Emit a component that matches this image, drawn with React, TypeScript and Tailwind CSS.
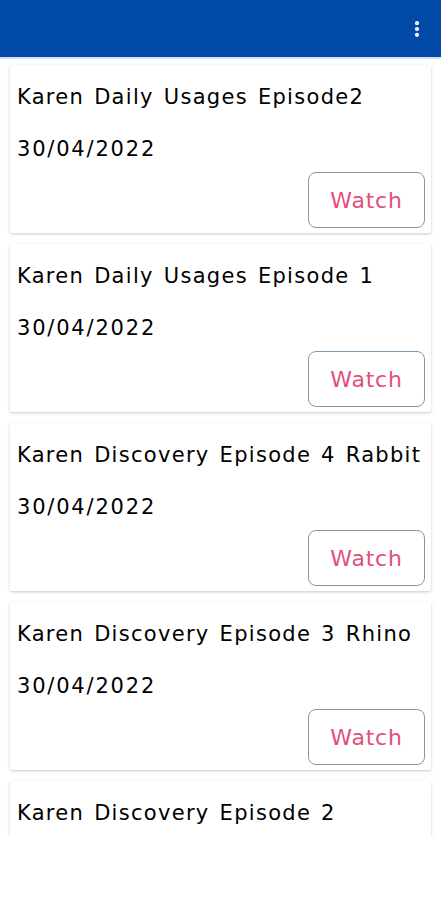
import { EllipsisVertical } from "lucide-react"

interface Episodio {
  id: number
  titulo: string
  fecha: string
}

const episodios: Episodio[] = [
  { id: 1, titulo: "Karen Daily Usages Episode2", fecha: "30/04/2022" },
  { id: 2, titulo: "Karen Daily Usages Episode 1", fecha: "30/04/2022" },
  { id: 3, titulo: "Karen Discovery Episode 4 Rabbit", fecha: "30/04/2022" },
  { id: 4, titulo: "Karen Discovery Episode 3 Rhino", fecha: "30/04/2022" },
  { id: 5, titulo: "Karen Discovery Episode 2", fecha: "30/04/2022" },
]

export default function App() {
  return (
    <div className="w-[441px] h-[900px] bg-white overflow-hidden" style={{ fontFamily: '"DejaVu Sans", sans-serif' }}>
      <header className="h-[59px] bg-[#014aa8] border-b-2 border-[#d5e1f2] flex items-center justify-end pr-[14px]">
        <EllipsisVertical className="text-white" size={20} strokeWidth={3} />
      </header>

      <div className="h-[777px] overflow-hidden pt-[6px] px-[10px] flex flex-col gap-[11px]">
        {episodios.map((ep) => (
          <div
            key={ep.id}
            className="shrink-0 h-[168px] bg-white rounded-[2px] shadow-[0_1px_3px_rgba(0,0,0,0.22)] pl-[7px] pr-[6px] pt-[14px] flex flex-col"
          >
            <p className="text-[21px] leading-[36px] text-black tracking-[1.3px] [word-spacing:2px] whitespace-nowrap">{ep.titulo}</p>
            <p className="text-[21px] leading-[36px] text-black tracking-[1.8px] mt-[16px]">{ep.fecha}</p>
            <div className="flex justify-end mt-[5px]">
              <button className="w-[117px] h-[56px] rounded-[8px] border border-[#7e98ad] text-[#e2507a] text-[22px] tracking-[0.8px]">
                Watch
              </button>
            </div>
          </div>
        ))}
      </div>
    </div>
  )
}
